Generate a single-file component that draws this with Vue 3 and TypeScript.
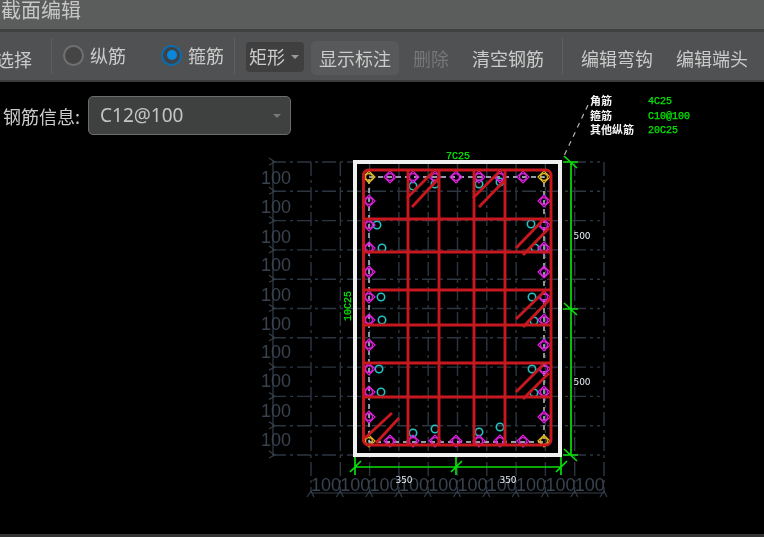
<script setup lang="ts">
const step = 29.3

// grid lines of the section drawing
const gridX = Array.from({ length: 11 }, (_, i) => 311 + i * step)
const gridY = Array.from({ length: 11 }, (_, i) => 162 + i * step)

const leftLabels = [184, 213, 243, 271, 301, 330, 358, 387, 417, 446]
const bottomLabels = Array.from({ length: 10 }, (_, i) => 326 + i * step)

const redV = [408, 439, 474, 505]
const redH = [219, 252, 290, 325, 363, 397]

// paired hatch strokes for the stirrup hooks
const hooks = [
  [407, 198, 433, 172], [412, 207, 439, 178],
  [473, 198, 499, 172], [479, 207, 505, 180],
  [516, 248, 543, 220], [523, 255, 549, 228],
  [516, 319, 545, 291], [523, 327, 551, 298],
  [516, 392, 543, 365], [523, 399, 549, 373],
  [365, 438, 392, 413], [376, 443, 399, 418],
]

const rowX = [390, 413, 435, 456, 479, 500, 523]
const colY = [201, 225, 248, 272, 297, 320, 345, 369, 392, 417]

const magenta = [
  ...rowX.map((x) => [x, 177]),
  ...rowX.map((x) => [x, 441]),
  ...colY.map((y) => [369, y]),
  ...colY.map((y) => [544, y]),
]
const corners = [[369, 177], [544, 177], [369, 441], [544, 441]]
const cyan = [
  [413, 186], [435, 184], [479, 184], [500, 182],
  [377, 225], [382, 248], [381, 297], [382, 320], [379, 369], [381, 392],
  [531, 224], [535, 248], [532, 297], [534, 321], [532, 369], [534, 393],
  [413, 433], [435, 429], [479, 432], [500, 427],
]

function diamond(x: number, y: number, r = 6) {
  return `${x - r},${y} ${x},${y - r} ${x + r},${y} ${x},${y + r}`
}
</script>

<template>
  <div class="app">
    <div class="title">截面编辑</div>

    <div class="toolbar">
      <span class="item pick">选择</span>
      <i class="sep sep-a" />
      <span class="radio" />
      <span class="item radio-text first">纵筋</span>
      <span class="radio on"><b /></span>
      <span class="item radio-text">箍筋</span>
      <i class="sep sep-b" />
      <div class="combo">矩形<em class="caret" /></div>
      <button class="btn">显示标注</button>
      <span class="item off">删除</span>
      <span class="item clear">清空钢筋</span>
      <i class="sep sep-c" />
      <span class="item hook">编辑弯钩</span>
      <span class="item head">编辑端头</span>
    </div>

    <div class="stage">
      <svg class="drawing" viewBox="0 82 764 451" width="764" height="451">
        <g class="grid">
          <line v-for="y in gridY" :key="'h' + y" x1="272" :y1="y" x2="600" :y2="y" />
          <line v-for="x in gridX" :key="'v' + x" :x1="x" y1="162" :x2="x" y2="493" />
        </g>
        <g class="dim">
          <line x1="273" y1="162" x2="273" y2="455" />
          <line x1="311" y1="493" x2="604" y2="493" />
          <path v-for="y in gridY" :key="'a' + y" :d="`M269 ${y - 4} L275 ${y} L269 ${y + 3}`" />
          <path v-for="x in gridX" :key="'b' + x" :d="`M${x - 4} 497 L${x} 491 L${x + 3} 497`" />
          <text v-for="y in leftLabels" :key="'l' + y" x="276" :y="y" text-anchor="middle">100</text>
          <text v-for="x in bottomLabels" :key="'t' + x" :x="x" y="491" text-anchor="middle">100</text>
        </g>

        <rect class="outline" x="355" y="162" width="205" height="293" />
        <rect class="stirrup" x="369" y="177" width="175" height="265" />

        <g class="bars">
          <circle v-for="(p, i) in cyan" :key="'c' + i" class="cy" :cx="p[0]" :cy="p[1]" r="3.7" />
          <g v-for="(p, i) in magenta" :key="'m' + i" class="mg">
            <circle :cx="p[0]" :cy="p[1]" r="3.4" />
            <polygon :points="diamond(p[0], p[1])" />
          </g>
          <g v-for="(p, i) in corners" :key="'y' + i" class="yl">
            <circle :cx="p[0]" :cy="p[1]" r="3.4" />
            <polygon :points="diamond(p[0], p[1])" />
          </g>
        </g>

        <g class="rebar">
          <rect x="363.5" y="170" width="187.5" height="275" rx="5" />
          <line v-for="x in redV" :key="x" :x1="x" y1="170" :x2="x" y2="445" />
          <line v-for="y in redH" :key="y" x1="364" :y1="y" x2="551" :y2="y" />
          <line v-for="(h, i) in hooks" :key="'k' + i" :x1="h[0]" :y1="h[1]" :x2="h[2]" :y2="h[3]" />
        </g>

        <g class="green">
          <path d="M355 457 V475 M456 457 V475 M561 457 V475 M350 472 L361 461 M451 472 L462 461 M556 472 L567 461 M355 467 H561" />
          <path d="M571 162 V455 M563 162 H578 M563 309 H578 M563 455 H578 M564 156 L577 168 M564 303 L577 315 M564 449 L577 461" />
        </g>
        <text class="g-text" x="458" y="159" text-anchor="middle">7C25</text>
        <text class="g-text" transform="translate(351 306) rotate(-90)" text-anchor="middle">10C25</text>
        <text class="w-text" x="404" y="483" text-anchor="middle">350</text>
        <text class="w-text" x="508" y="483" text-anchor="middle">350</text>
        <text class="w-text" x="582" y="239" text-anchor="middle">500</text>
        <text class="w-text" x="582" y="385" text-anchor="middle">500</text>

        <line class="leader" x1="588" y1="105" x2="563" y2="158" />
        <text class="legend" x="590" y="105">角筋</text>
        <text class="legend" x="590" y="120">箍筋</text>
        <text class="legend" x="590" y="134">其他纵筋</text>
        <text class="g-text" x="648" y="104">4C25</text>
        <text class="g-text" x="648" y="119">C10@100</text>
        <text class="g-text" x="648" y="133">20C25</text>
      </svg>

      <div class="info">
        <label class="info-label">钢筋信息:</label>
        <div class="select">C12@100<em class="caret dim-caret" /></div>
      </div>
    </div>

    <div class="footer" />
  </div>
</template>

<style>
html,
body {
  margin: 0;
  background: #000;
}
</style>

<style scoped>
.app {
  width: 764px;
  height: 537px;
  display: flex;
  flex-direction: column;
  overflow: hidden;
  background: #000;
  color: #cbcbcb;
  font-family: "Noto Sans CJK SC", "Liberation Sans", sans-serif;
  filter: blur(0.4px);
}

.title {
  flex: none;
  height: 29px;
  line-height: 20px;
  padding-left: 1px;
  font-size: 20px;
  background: #5b5c5c;
  border-bottom: 3px solid #3f4040;
  color: #c6c6c6;
}

.toolbar {
  flex: none;
  box-sizing: border-box;
  height: 50px;
  padding-top: 4px;
  display: flex;
  align-items: center;
  background: #505152;
  border-bottom: 2px solid #3a3a3a;
  font-size: 18px;
}

.item {
  flex: none;
  white-space: nowrap;
  line-height: 26px;
}

.pick {
  margin-left: -4px;
  margin-top: 2px;
}

.sep {
  flex: none;
  width: 1px;
  height: 36px;
  margin-top: -4px;
  background: #5d5e5f;
}

.sep-a {
  margin-left: 19px;
  margin-right: 11px;
}

.sep-b {
  margin-left: 10px;
  margin-right: 11px;
}

.sep-c {
  margin-left: 18px;
  margin-right: 18px;
}

.radio {
  flex: none;
  box-sizing: border-box;
  width: 21px;
  height: 21px;
  border: 2px solid #6f7070;
  border-radius: 50%;
  background: #454545;
  display: flex;
  align-items: center;
  justify-content: center;
  margin-top: -6px;
}

.radio.on {
  border-color: #0b6cb0;
  background: #3f4244;
}

.radio.on b {
  width: 10px;
  height: 10px;
  border-radius: 50%;
  background: #0a86dc;
}

.radio-text {
  margin-left: 6px;
  margin-top: -6px;
}

.radio-text.first {
  margin-right: 35px;
}

.combo {
  flex: none;
  box-sizing: border-box;
  width: 58px;
  height: 30px;
  margin-top: -3px;
  padding-left: 3px;
  line-height: 28px;
  border-radius: 4px;
  background: #3f3f3f;
  position: relative;
}

.caret {
  position: absolute;
  right: 5px;
  top: 13px;
  border-left: 4px solid transparent;
  border-right: 4px solid transparent;
  border-top: 4px solid #9a9a9a;
}

.btn {
  flex: none;
  width: 88px;
  height: 34px;
  margin-left: 7px;
  padding: 0;
  border: 0;
  border-radius: 5px;
  background: #58595a;
  color: #cbcbcb;
  font: inherit;
  line-height: 26px;
}

.off {
  margin-left: 14px;
  color: #767778;
}

.clear {
  margin-left: 23px;
}

.head {
  margin-left: 23px;
}

.stage {
  flex: 1;
  min-height: 0;
  position: relative;
}

.drawing {
  position: absolute;
  left: 0;
  top: 0;
  display: block;
}

.info {
  position: relative;
  display: flex;
  align-items: center;
  padding: 14px 0 0 3px;
}

.info-label {
  width: 85px;
  font-size: 18px;
  white-space: nowrap;
}

.select {
  box-sizing: border-box;
  width: 203px;
  height: 39px;
  padding-left: 11px;
  line-height: 37px;
  font-size: 19px;
  font-family: "Noto Sans", "Noto Sans CJK SC", sans-serif;
  color: #c4c4c4;
  background: #3f4040;
  border: 1px solid #6b6c6c;
  border-radius: 5px;
  position: relative;
}

.dim-caret {
  right: 9px;
  top: 17px;
  border-top-color: #777;
}

.footer {
  flex: none;
  height: 3px;
  background: #333;
}

.grid line {
  stroke: #2c3643;
  stroke-width: 1.4;
  stroke-dasharray: 14 4 3 4;
}

.dim line,
.dim path {
  stroke: #333e4b;
  stroke-width: 1.2;
  fill: none;
}

.dim text {
  fill: #38434f;
  font-family: "Liberation Sans", sans-serif;
  font-size: 18px;
}

.outline {
  fill: none;
  stroke: #f0f0f0;
  stroke-width: 4;
}

.stirrup {
  fill: none;
  stroke: #c3d0dc;
  stroke-width: 1.4;
  stroke-dasharray: 5 4;
}

.cy {
  fill: none;
  stroke: #22c4c4;
  stroke-width: 1.6;
}

.mg circle,
.mg polygon {
  fill: none;
  stroke: #e020e0;
  stroke-width: 1.2;
}

.yl circle,
.yl polygon {
  fill: none;
  stroke: #e8b820;
  stroke-width: 1.2;
}

.rebar rect,
.rebar line {
  fill: none;
  stroke: #c8181f;
  stroke-width: 2.9;
}

.green path {
  fill: none;
  stroke: #08e008;
  stroke-width: 1.7;
}

.g-text {
  fill: #07e907;
  stroke: #07e907;
  stroke-width: 0.25;
  font-family: "Liberation Mono", monospace;
  font-size: 10px;
}

.w-text {
  fill: #e6eef6;
  font-family: "DejaVu Sans", sans-serif;
  font-size: 9px;
}

.leader {
  stroke: #b4b4b4;
  stroke-width: 1.2;
  stroke-dasharray: 5 5;
}

.legend {
  fill: #f4f4f4;
  font-family: "Noto Sans CJK SC", sans-serif;
  font-size: 11px;
  font-weight: 700;
}
</style>
